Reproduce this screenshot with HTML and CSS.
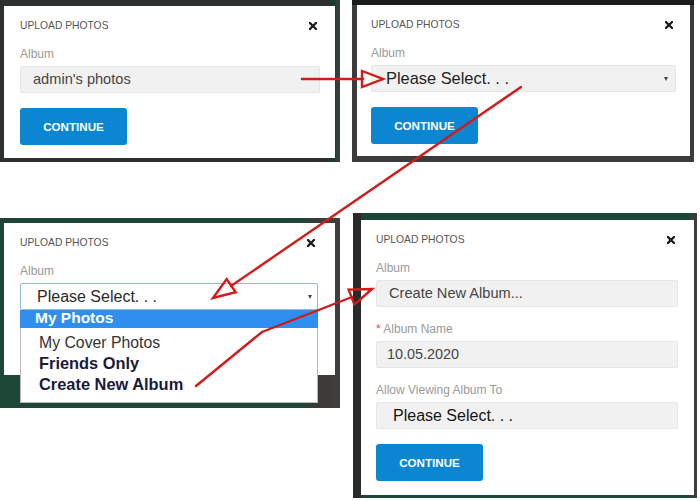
FILE: index.html
```html
<!DOCTYPE html>
<html lang="en">
<head>
<meta charset="utf-8">
<title>Upload photos – steps</title>
<link rel="stylesheet" href="styles.css">
</head>
<body>
<div class="board">
  <div class="col col-left">
    <section class="frame frame-1">
      <div class="dialog">
        <div class="dlg-head">
          <span class="dlg-title">UPLOAD PHOTOS</span>
          <svg class="close" viewBox="0 0 8 8" width="8" height="8"><path d="M1 1L7 7M7 1L1 7"/></svg>
        </div>
        <div class="field">
          <div class="label">Album</div>
          <div class="input">admin's photos</div>
        </div>
        <button class="btn">CONTINUE</button>
      </div>
    </section>

    <section class="frame frame-3">
      <div class="dialog dialog-3">
        <div class="dlg-head">
          <span class="dlg-title">UPLOAD PHOTOS</span>
          <svg class="close" viewBox="0 0 8 8" width="8" height="8"><path d="M1 1L7 7M7 1L1 7"/></svg>
        </div>
        <div class="field">
          <div class="label">Album</div>
          <div class="select-wrap">
            <div class="input select select-open"><span class="sel-text">Please Select. . .</span><span class="caret"></span></div>
            <ul class="menu">
              <li class="opt opt-active">My Photos</li>
              <li class="opt opt-plain">My Cover Photos</li>
              <li class="opt opt-strong">Friends Only</li>
              <li class="opt opt-strong">Create New Album</li>
            </ul>
          </div>
        </div>
        <button class="btn btn-covered">CONTINUE</button>
      </div>
    </section>
  </div>

  <div class="col col-right">
    <section class="frame frame-2">
      <div class="dialog">
        <div class="dlg-head">
          <span class="dlg-title">UPLOAD PHOTOS</span>
          <svg class="close" viewBox="0 0 8 8" width="8" height="8"><path d="M1 1L7 7M7 1L1 7"/></svg>
        </div>
        <div class="field">
          <div class="label">Album</div>
          <div class="input select"><span class="sel-text sel-big">Please Select. . .</span><span class="caret"></span></div>
        </div>
        <button class="btn">CONTINUE</button>
      </div>
    </section>

    <section class="frame frame-4">
      <div class="dialog">
        <div class="dlg-head">
          <span class="dlg-title">UPLOAD PHOTOS</span>
          <svg class="close" viewBox="0 0 8 8" width="8" height="8"><path d="M1 1L7 7M7 1L1 7"/></svg>
        </div>
        <div class="field">
          <div class="label">Album</div>
          <div class="input">Create New Album...</div>
        </div>
        <div class="field">
          <div class="label"><span class="req">*</span> Album Name</div>
          <div class="input input-date">10.05.2020</div>
        </div>
        <div class="field">
          <div class="label">Allow Viewing Album To</div>
          <div class="input select select-plain"><span class="sel-text sel-dark">Please Select. . .</span></div>
        </div>
        <button class="btn">CONTINUE</button>
      </div>
    </section>
  </div>
</div>

<svg class="arrows" width="700" height="501" viewBox="0 0 700 501">
  <g fill="none" stroke="#d41a1a" stroke-width="2.4" stroke-linejoin="miter" stroke-linecap="round">
    <path d="M302 79 L363 79"/>
    <path d="M362 71 L383 79 L362 87 Z"/>
    <path d="M521 87 L231 286"/>
    <path d="M213 298 L226.7 279 L235.7 292.2 Z"/>
    <path d="M196 386 L262 332 L352 297"/>
    <path d="M372 289 L348.6 289.6 L354.4 304.4 Z"/>
  </g>
</svg>
</body>
</html>
```

FILE: styles.css
```css
* { box-sizing: border-box; }

html, body {
  margin: 0;
  padding: 0;
  background: #ffffff;
}

body {
  width: 700px;
  height: 501px;
  overflow: hidden;
  position: relative;
  font-family: "Liberation Sans", Arial, sans-serif;
}

.board {
  display: flex;
  gap: 12px;
  align-items: flex-start;
}

.col {
  display: flex;
  flex-direction: column;
}

.col-left { width: 340px; }
.col-right { width: 345px; }

/* dark screenshot frames */
.frame {
  background: #2f3331;
}

.frame-1 {
  height: 162px;
  padding: 6px 5px 4px 4px;
  background: linear-gradient(to right, #2c302e 0, #2c302e 330px, #17402f 335px, #3a3c3b 337px);
}

.frame-2 {
  width: 342px;
  height: 162px;
  padding: 5px 4px 5px 5px;
  background: linear-gradient(to bottom, #1a1d1c 0, #1a1d1c 5px, #3a3d3c 5px);
}

.frame-3 {
  margin-top: 56px;
  height: 190px;
  padding: 5px 5px 0 4px;
  background: linear-gradient(to right, #1d4636 0, #1d4636 300px, #3d3a37 320px, #3f3f3f 340px);
}

.frame-4 {
  margin-top: 51px;
  margin-left: 1px;
  width: 344px;
  height: 285px;
  padding: 7px 3px 3px 8px;
  background: linear-gradient(to right, #2a2a2a 0, #2a2a2a 8px, #1b4536 8px, #1b4536 336px, #3b3d3c 336px);
}

/* dialog */
.dialog {
  background: #ffffff;
  padding: 13px 15px 13px 16px;
  display: flex;
  flex-direction: column;
  align-items: flex-start;
}

.frame-4 .dialog { padding: 13px 16px 14px 15px; }
.frame-2 .dialog { padding: 13px 14px 12px 14px; }
.dialog-3 { padding-right: 17px; }

.dlg-head {
  align-self: stretch;
  height: 14px;
  display: flex;
  align-items: center;
  justify-content: space-between;
  margin-bottom: 14px;
}

.dlg-title {
  font-size: 10.3px;
  line-height: 14px;
  color: #555;
}

.close {
  margin-right: 3px;
  fill: none;
  stroke: #1c1c1c;
  stroke-width: 2.3;
  stroke-linecap: square;
}

.field {
  align-self: stretch;
  margin-bottom: 15px;
}

.label {
  font-size: 12px;
  line-height: 14px;
  color: #9a9a9a;
  margin-bottom: 5px;
}

.req { color: #d9534f; }

.input {
  height: 27px;
  background: #f1f1f1;
  border: 1px solid #e6e6e6;
  border-radius: 2px;
  padding-left: 12px;
  font-size: 14.6px;
  line-height: 25px;
  color: #454545;
  white-space: nowrap;
}

.input-date { padding-left: 10px; font-size: 14.4px; }

.select {
  display: flex;
  align-items: center;
  justify-content: space-between;
  padding-right: 7px;
  padding-left: 13px;
}

.sel-text { font-size: 16.4px; color: #222; line-height: 25px; }
.sel-big { padding-left: 1px; }
.sel-dark { color: #151515; font-size: 16px; padding-left: 3px; }

.caret {
  width: 0;
  height: 0;
  border-left: 2.5px solid transparent;
  border-right: 2.5px solid transparent;
  border-top: 4px solid #444;
}

.select-open {
  background: #ffffff;
  border-color: #8fbbdd;
  padding-left: 16px;
  padding-right: 5px;
}

.select-open .sel-text { font-size: 16px; color: #2a2a2a; }

.select-wrap { position: relative; }

.menu {
  list-style: none;
  margin: 0;
  padding: 0 0 7px 0;
  position: absolute;
  top: 100%;
  left: 0;
  right: 0;
  background: #ffffff;
  border: 1px solid #b9b9b9;
  border-top: none;
  z-index: 2;
}

.opt {
  height: 21px;
  line-height: 21px;
  padding-left: 18px;
  white-space: nowrap;
}

.opt-active {
  height: 18px;
  line-height: 16px;
  padding-left: 15px;
  margin: 0 -1px 4px -1px;
  background: #2f8ff0;
  color: #ffffff;
  font-weight: bold;
  font-size: 15.5px;
}

.opt-plain {
  font-size: 15.8px;
  color: #333;
}

.opt-strong {
  font-size: 16.4px;
  font-weight: bold;
  color: #1a1a3a;
}

.btn {
  width: 107px;
  height: 37px;
  border: none;
  border-radius: 3px;
  background: #0b87d1;
  color: #ffffff;
  font-family: "Liberation Sans", Arial, sans-serif;
  font-weight: bold;
  font-size: 11.6px;
  padding: 0;
  cursor: pointer;
}

.btn-covered { visibility: hidden; }

.arrows {
  position: absolute;
  top: 0;
  left: 0;
  pointer-events: none;
  z-index: 5;
}
```
